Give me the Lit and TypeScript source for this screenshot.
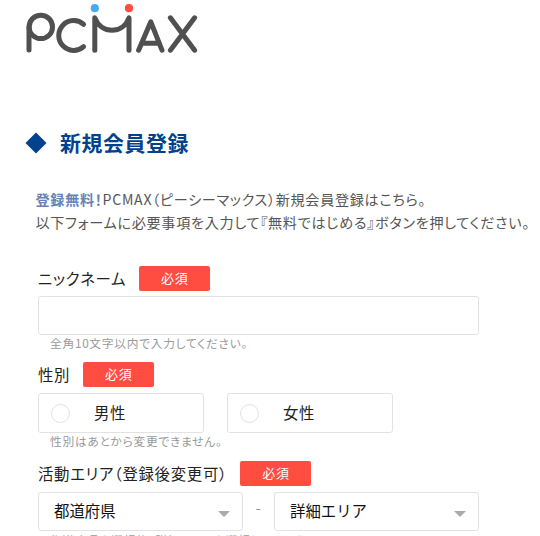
import { LitElement, css, html } from 'lit';
import { customElement, property } from 'lit/decorators.js';

@customElement('pcmax-logo')
export class PcmaxLogo extends LitElement {

  static get styles() {
    return css`
      :host {
        display: block;
        height: 64px;
      }

      .logo {
        display: block;
        fill: none;
        stroke: #505050;
        stroke-width: 5;
        stroke-linecap: round;
        stroke-linejoin: round;
      }

      .dot {
        stroke: none;
      }

      .blue {
        fill: #4ba9ee;
      }

      .red {
        fill: #ff4d41;
      }
    `;
  }

  render() {
    return html`
      <svg class="logo" width="210" height="64" viewBox="0 0 210 64" role="img" aria-label="PCMAX">
        <path d="M29 50V26.9" />
        <circle cx="40.8" cy="26.9" r="11.7" />
        <path d="M83.6 24.4A14.9 14.9 0 1 0 83.6 46.6" />
        <path d="M94.8 50.2V17.8C101 34.5 123 34.5 129 17.8V50.2" />
        <path d="M138.6 50.2L150.8 21.8L162 50.2M143 43.3H159" />
        <path d="M170.4 17.8L194.6 50.2M194.6 17.8L170.4 50.2" />
        <circle class="dot blue" cx="94.8" cy="8.2" r="4.1" />
        <circle class="dot red" cx="129" cy="8.2" r="4.1" />
      </svg>
    `;
  }
}

@customElement('form-label')
export class FormLabel extends LitElement {

  static get styles() {
    return css`
      :host {
        display: flex;
        align-items: center;
        height: 25px;
        color: #222;
        font-size: 15.4px;
      }

      .text {
        line-height: 24px;
        padding-bottom: 1px;
      }

      .badge {
        width: 71px;
        margin-left: 13px;
        padding-bottom: 1px;
        border-radius: 2px;
        background: #ff4d41;
        color: #fff;
        font-size: 13px;
        line-height: 24px;
        text-align: center;
      }
    `;
  }

  @property() text = ''

  render() {
    return html`<span class="text">${this.text}</span><span class="badge">必須</span>`;
  }
}

@customElement('app-root')
export class AppRoot extends LitElement {

  static get styles() {
    return css`
      :host {
        display: block;
        height: 536px;
        overflow: hidden;
        background: #fff;
        color: #555;
        font-family: "Noto Sans CJK JP", sans-serif;
        font-size: 14.12px;
        font-feature-settings: "palt";
        letter-spacing: 0.05em;
        white-space: nowrap;
      }

      .title {
        display: flex;
        align-items: center;
        gap: 13px;
        height: 30px;
        margin: 64px 0 0 25px;
        color: #00428e;
        font-size: 20.9px;
        font-weight: bold;
        letter-spacing: 0.03em;
      }

      .title-text {
        padding-bottom: 3px;
      }

      .diamond {
        fill: currentColor;
      }

      .lead {
        margin: 30px 0 0 35.5px;
        line-height: 23px;
      }

      .lead strong {
        color: #6484b5;
      }

      .form {
        width: 441px;
        margin: 32px 0 0 38px;
      }

      .input {
        box-sizing: border-box;
        display: block;
        width: 100%;
        height: 39px;
        margin-top: 5px;
        border: 1px solid #e2e2e2;
        border-radius: 3px;
        outline: none;
      }

      .hint {
        height: 19px;
        padding-left: 12px;
        color: #999;
        font-size: 11.76px;
        line-height: 16px;
      }

      .field + .field {
        margin-top: 8px;
      }

      .field.area {
        margin-top: 9px;
      }

      .area .hint {
        line-height: 17px;
      }

      .radios {
        display: flex;
        gap: 23px;
        margin-top: 6px;
      }

      .radio {
        box-sizing: border-box;
        display: flex;
        align-items: center;
        gap: 24px;
        width: 166px;
        height: 40px;
        padding-left: 12px;
        border: 1px solid #e2e2e2;
        border-radius: 3px;
        color: #222;
        font-size: 15.4px;
      }

      .radio-text {
        padding-bottom: 2px;
      }

      .circle {
        box-sizing: border-box;
        width: 19px;
        height: 19px;
        border: 1px solid #e2e2e2;
        border-radius: 50%;
      }

      .selects {
        display: flex;
        align-items: center;
        justify-content: space-between;
        margin-top: 6px;
        color: #888;
      }

      .dash {
        padding-bottom: 10px;
      }

      .select {
        box-sizing: border-box;
        display: flex;
        align-items: center;
        justify-content: space-between;
        width: 205px;
        height: 39px;
        padding: 0 12px 0 15px;
        border: 1px solid #e2e2e2;
        border-radius: 3px;
        color: #111;
        font-size: 15.4px;
        font-feature-settings: normal;
        letter-spacing: 0;
      }

      .select-text {
        padding-bottom: 4px;
      }

      .arrow {
        margin-top: 4px;
        border: 6px solid transparent;
        border-top-color: #aaa;
        border-bottom: 0;
      }
    `;
  }

  private radio(text: string) {
    return html`<label class="radio"><span class="circle"></span><span class="radio-text">${text}</span></label>`;
  }

  private select(text: string) {
    return html`<div class="select"><span class="select-text">${text}</span><span class="arrow"></span></div>`;
  }

  render() {
    return html`
      <pcmax-logo></pcmax-logo>
      <div class="title">
        <svg class="diamond" width="22" height="22" viewBox="0 0 22 22"><path d="M11 0.5L21.5 11L11 21.5L0.5 11Z" /></svg>
        <span class="title-text">新規会員登録</span>
      </div>
      <div class="lead">
        <strong>登録無料！</strong>PCMAX（ピーシーマックス）新規会員登録はこちら。<br>
        以下フォームに必要事項を入力して『無料ではじめる』ボタンを押してください。
      </div>
      <div class="form">
        <div class="field">
          <form-label text="ニックネーム"></form-label>
          <input class="input" type="text">
          <div class="hint">全角10文字以内で入力してください。</div>
        </div>
        <div class="field">
          <form-label text="性別"></form-label>
          <div class="radios">${this.radio('男性')}${this.radio('女性')}</div>
          <div class="hint">性別はあとから変更できません。</div>
        </div>
        <div class="field area">
          <form-label text="活動エリア（登録後変更可）"></form-label>
          <div class="selects">${this.select('都道府県')}<span class="dash">-</span>${this.select('詳細エリア')}</div>
          <div class="hint">都道府県を選択後、詳細エリアを選択してください。</div>
        </div>
      </div>
    `;
  }
}
